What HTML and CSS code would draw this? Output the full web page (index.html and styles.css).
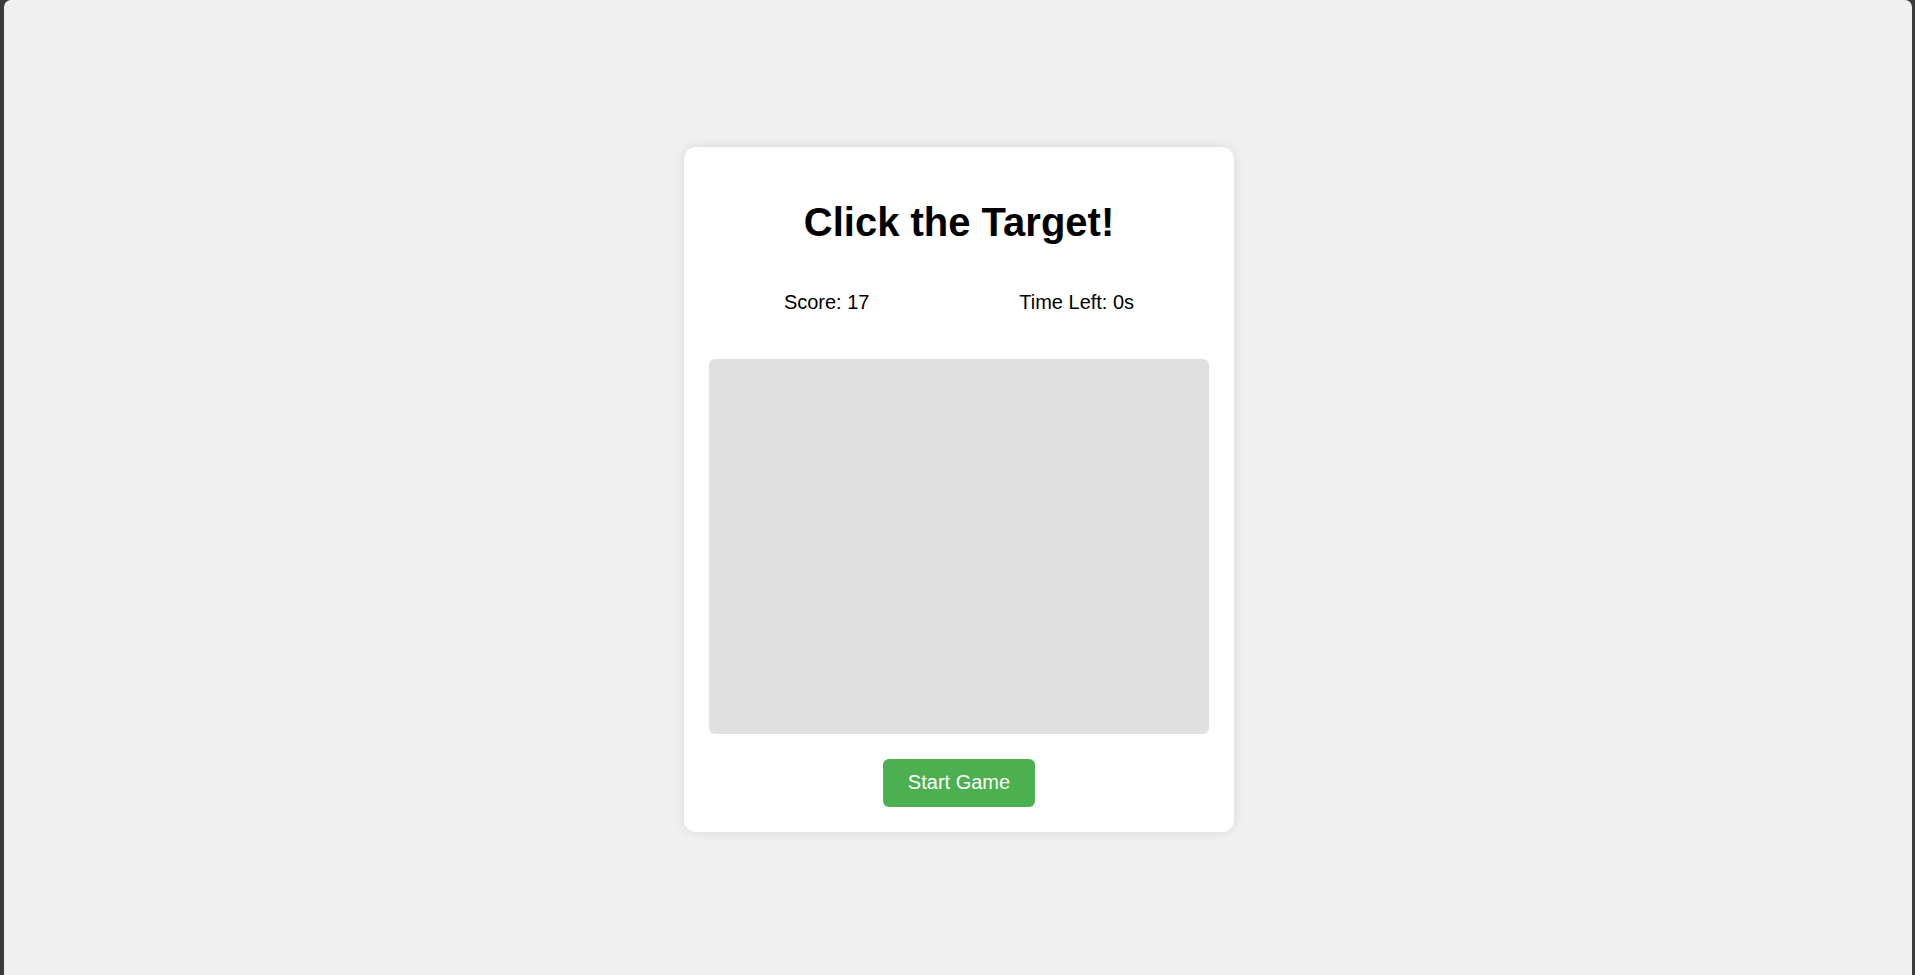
FILE: index.html
```html
<!DOCTYPE html>
<html lang="en">
<head>
<meta charset="utf-8">
<title>Click the Target!</title>
<link rel="stylesheet" href="styles.css">
</head>
<body>
<div class="frame">
  <div class="card">
    <h1 class="title">Click the Target!</h1>
    <div class="stats">
      <span class="stat">Score: 17</span>
      <span class="stat">Time Left: 0s</span>
    </div>
    <div class="game-area"></div>
    <button class="start-btn" type="button">Start Game</button>
  </div>
</div>
</body>
</html>
```

FILE: styles.css
```css
html, body {
  margin: 0;
  padding: 0;
  height: 100%;
  background: #3b3b3b;
}

body {
  font-family: "Liberation Sans", Arial, sans-serif;
  color: #000;
}

.frame {
  box-sizing: border-box;
  height: 100%;
  margin-left: 4px;
  margin-right: 3px;
  background: #f0f0f0;
  border-top-left-radius: 7px;
  border-top-right-radius: 7px;
  display: flex;
  align-items: center;
  justify-content: center;
  padding-top: 3px;
  padding-left: 2px;
}

.card {
  box-sizing: border-box;
  width: 550px;
  background: #ffffff;
  border-radius: 12px;
  box-shadow: 0 0 12px rgba(0, 0, 0, 0.1);
  padding: 25px;
  display: flex;
  flex-direction: column;
  align-items: center;
}

.title {
  margin: 27px 0 0;
  font-size: 40px;
  line-height: 46px;
  font-weight: bold;
  text-align: center;
}

.stats {
  align-self: stretch;
  display: flex;
  justify-content: space-around;
  margin-top: 46px;
  font-size: 20px;
  line-height: 23px;
}

.game-area {
  align-self: stretch;
  height: 375px;
  margin-top: 45px;
  background: #e0e0e0;
  border-radius: 6px;
}

.start-btn {
  margin-top: 25px;
  height: 48px;
  padding: 0 25px;
  border: none;
  border-radius: 6px;
  background: #4caf50;
  color: #ffffff;
  font-family: "Liberation Sans", Arial, sans-serif;
  font-size: 20px;
  cursor: pointer;
}
```
